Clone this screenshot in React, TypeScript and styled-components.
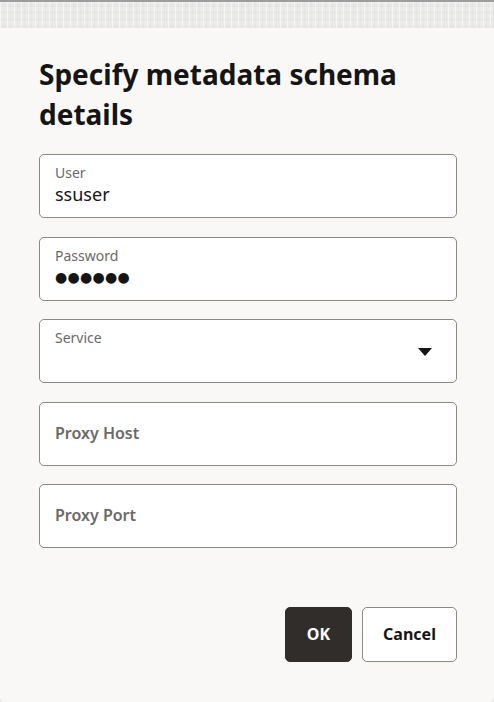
import React from 'react';
import styled, { createGlobalStyle } from 'styled-components';

const GlobalStyle = createGlobalStyle`
  html, body {
    margin: 0;
    padding: 0;
    background: #ebebea;
  }
  body {
    font-family: "Noto Sans", "Open Sans", sans-serif;
  }
`;

const Page = styled.div`
  display: flex;
  flex-direction: column;
  width: 494px;
  height: 702px;
  overflow: hidden;
`;

const Backdrop = styled.div`
  height: 26px;
  flex-shrink: 0;
  border-top: 2px solid #9d9d9d;
  background-color: #ececeb;
  background-image:
    repeating-linear-gradient(90deg, rgba(255,255,255,0.5) 0 1px, transparent 1px 3px, rgba(225,225,225,0.5) 3px 4px, transparent 4px 7px),
    repeating-linear-gradient(0deg, rgba(228,228,228,0.6) 0 3px, transparent 3px 7px);
`;

const Dialog = styled.div`
  flex: 1;
  display: flex;
  flex-direction: column;
  background: #f9f8f6;
  padding: 26px 37px 0 39px;
  border-radius: 0 0 6px 6px;
`;

const Title = styled.h1`
  margin: 0 0 20px;
  font-size: 28px;
  line-height: 40px;
  font-weight: 700;
  color: #161513;
`;

const Fields = styled.div`
  display: flex;
  flex-direction: column;
  gap: 18.5px;
`;

const Field = styled.div<{ $filled?: boolean }>`
  position: relative;
  height: 64px;
  box-sizing: border-box;
  border: 1px solid #8b8985;
  border-radius: 5px;
  background: #fff;
  display: flex;
  flex-direction: column;
  justify-content: ${p => (p.$filled ? 'flex-start' : 'center')};
  padding: ${p => (p.$filled ? '9px 15px 0' : '0 15px')};
`;

const Label = styled.span`
  font-size: 14px;
  line-height: 18px;
  color: #6b6965;
`;

const Placeholder = styled.span`
  font-size: 16px;
  font-weight: 600;
  line-height: 20px;
  color: #6b6965;
  margin-top: -2px;
`;

const Value = styled.span`
  font-size: 18px;
  line-height: 24px;
  color: #161513;
`;

const Dots = styled.span`
  font-family: "DejaVu Sans", sans-serif;
  font-size: 14px;
  line-height: 24px;
  letter-spacing: 0.3px;
  color: #161513;
`;

const Caret = styled.svg`
  position: absolute;
  right: 24px;
  top: 28px;
`;

const Actions = styled.div`
  display: flex;
  justify-content: flex-end;
  gap: 10px;
  margin-top: 59px;
`;

const Button = styled.button<{ $primary?: boolean }>`
  height: 55px;
  padding: 0 20px 2px;
  font-family: "Noto Sans", sans-serif;
  font-size: 16px;
  font-weight: 700;
  border-radius: 5px;
  cursor: pointer;
  border: 1px solid ${p => (p.$primary ? '#312d2a' : '#8b8985')};
  background: ${p => (p.$primary ? '#312d2a' : '#fff')};
  color: ${p => (p.$primary ? '#fff' : '#161513')};
  min-width: ${p => (p.$primary ? '67px' : '95px')};
`;

const App: React.FC = () => {
  return (
    <Page>
      <GlobalStyle />
      <Backdrop />
      <Dialog>
        <Title>Specify metadata schema details</Title>
        <Fields>
          <Field $filled>
            <Label>User</Label>
            <Value>ssuser</Value>
          </Field>
          <Field $filled>
            <Label>Password</Label>
            <Dots>●●●●●●</Dots>
          </Field>
          <Field $filled>
            <Label>Service</Label>
            <Caret width="14" height="8" viewBox="0 0 14 8">
              <path d="M0 0 H14 L7 8 Z" fill="#161513" />
            </Caret>
          </Field>
          <Field>
            <Placeholder>Proxy Host</Placeholder>
          </Field>
          <Field>
            <Placeholder>Proxy Port</Placeholder>
          </Field>
        </Fields>
        <Actions>
          <Button $primary>OK</Button>
          <Button>Cancel</Button>
        </Actions>
      </Dialog>
    </Page>
  );
};

export default App;
